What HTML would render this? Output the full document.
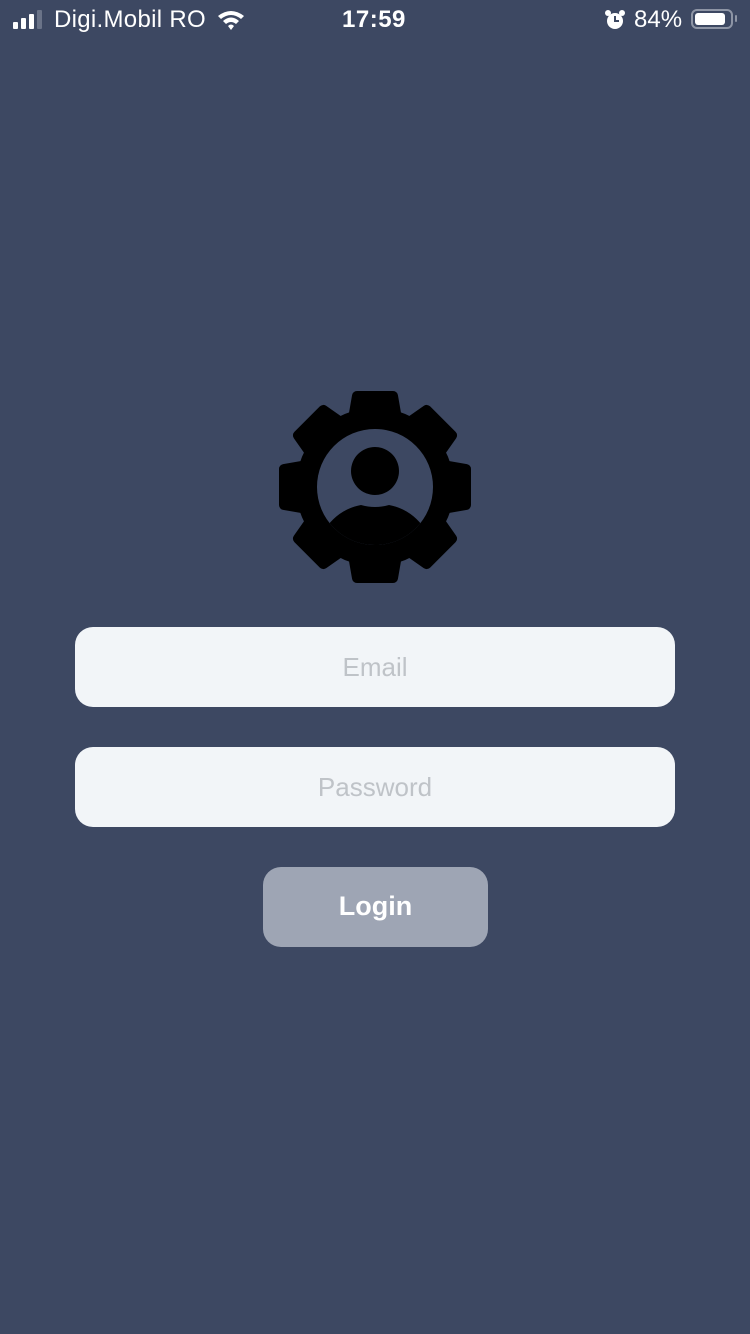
<!DOCTYPE html>
<html><head><meta charset="utf-8"><style>
html,body{margin:0;padding:0}
body{width:750px;height:1334px;background:#3d4862;position:relative;overflow:hidden;font-family:"Liberation Sans",sans-serif;color:#fff}
.sb{position:absolute;top:0;left:0;width:750px;height:40px;font-size:24px}
.abs{position:absolute}
.inp{position:absolute;left:75px;width:600px;height:80px;background:#f2f5f8;border-radius:18px;color:#bfc3c8;font-size:26px;text-align:center;line-height:80px}
.btn{position:absolute;left:263px;top:867px;width:225px;height:80px;border-radius:18px;background:#9ea5b4;color:#fff;font-weight:bold;font-size:27px;text-align:center;line-height:78px}
</style></head><body>
<div class="sb">
  <div class="abs" style="left:13px;top:22px;width:5px;height:7px;background:#fff;border-radius:1px"></div>
  <div class="abs" style="left:21px;top:18px;width:5px;height:11px;background:#fff;border-radius:1px"></div>
  <div class="abs" style="left:29px;top:14px;width:5px;height:15px;background:#fff;border-radius:1px"></div>
  <div class="abs" style="left:37px;top:10px;width:5px;height:19px;background:#6a7388;border-radius:1px"></div>
  <div class="abs" style="left:54px;top:6px;font-size:24px;letter-spacing:0.3px">Digi.Mobil RO</div>
  <svg class="abs" style="left:216px;top:9px" width="30" height="22" viewBox="0 0 30 22">
    <path d="M2 7 Q15 -3 28 7 L25 10 Q15 2 5 10Z" fill="#fff"/>
    <path d="M7 12 Q15 5 23 12 L20 15 Q15 11 10 15Z" fill="#fff"/>
    <path d="M12 17 Q15 14 18 17 L15 21Z" fill="#fff"/>
  </svg>
  <div class="abs" style="left:342px;top:6px;font-size:24px;font-weight:bold;letter-spacing:0.5px">17:59</div>
  <svg class="abs" style="left:604px;top:9px" width="22" height="22" viewBox="0 0 22 22">
    <circle cx="11" cy="12" r="8" fill="#fff"/>
    <circle cx="4" cy="4" r="3" fill="#fff"/><circle cx="18" cy="4" r="3" fill="#fff"/>
    <path d="M11 7 V12 H15" stroke="#3d4862" stroke-width="2" fill="none"/>
  </svg>
  <div class="abs" style="left:634px;top:6px;font-size:24px">84%</div>
  <div class="abs" style="left:691px;top:9px;width:42px;height:20px;border:2px solid #8e95a5;border-radius:6px;box-sizing:border-box"></div>
  <div class="abs" style="left:695px;top:13px;width:30px;height:12px;background:#fff;border-radius:3px"></div>
  <div class="abs" style="left:735px;top:15px;width:2px;height:7px;background:#8e95a5;border-radius:1px"></div>
</div>

<svg class="abs" style="left:275px;top:387px" width="200" height="200" viewBox="-100 -100 200 200">
  <defs>
    <clipPath id="hole"><circle r="58"/></clipPath>
    <polygon id="t" points="-18,-91 18,-91 22,-68 -22,-68" stroke="#000" stroke-width="10" stroke-linejoin="round" fill="#000"/>
  </defs>
  <circle r="79" fill="#000"/>
  <use href="#t"/>
  <use href="#t" transform="rotate(45)"/>
  <use href="#t" transform="rotate(90)"/>
  <use href="#t" transform="rotate(135)"/>
  <use href="#t" transform="rotate(180)"/>
  <use href="#t" transform="rotate(225)"/>
  <use href="#t" transform="rotate(270)"/>
  <use href="#t" transform="rotate(315)"/>
  <circle r="58" fill="#3d4862"/>
  <circle cx="0" cy="-16" r="24" fill="#000"/>
  <g clip-path="url(#hole)">
    <path d="M-50 42 Q-36 22 -14 18 Q0 22 14 18 Q36 22 50 42 L60 80 L-60 80Z" fill="#000"/>
  </g>
</svg>

<div class="inp" style="top:627px">Email</div>
<div class="inp" style="top:747px">Password</div>
<div class="btn">Login</div>
</body></html>
